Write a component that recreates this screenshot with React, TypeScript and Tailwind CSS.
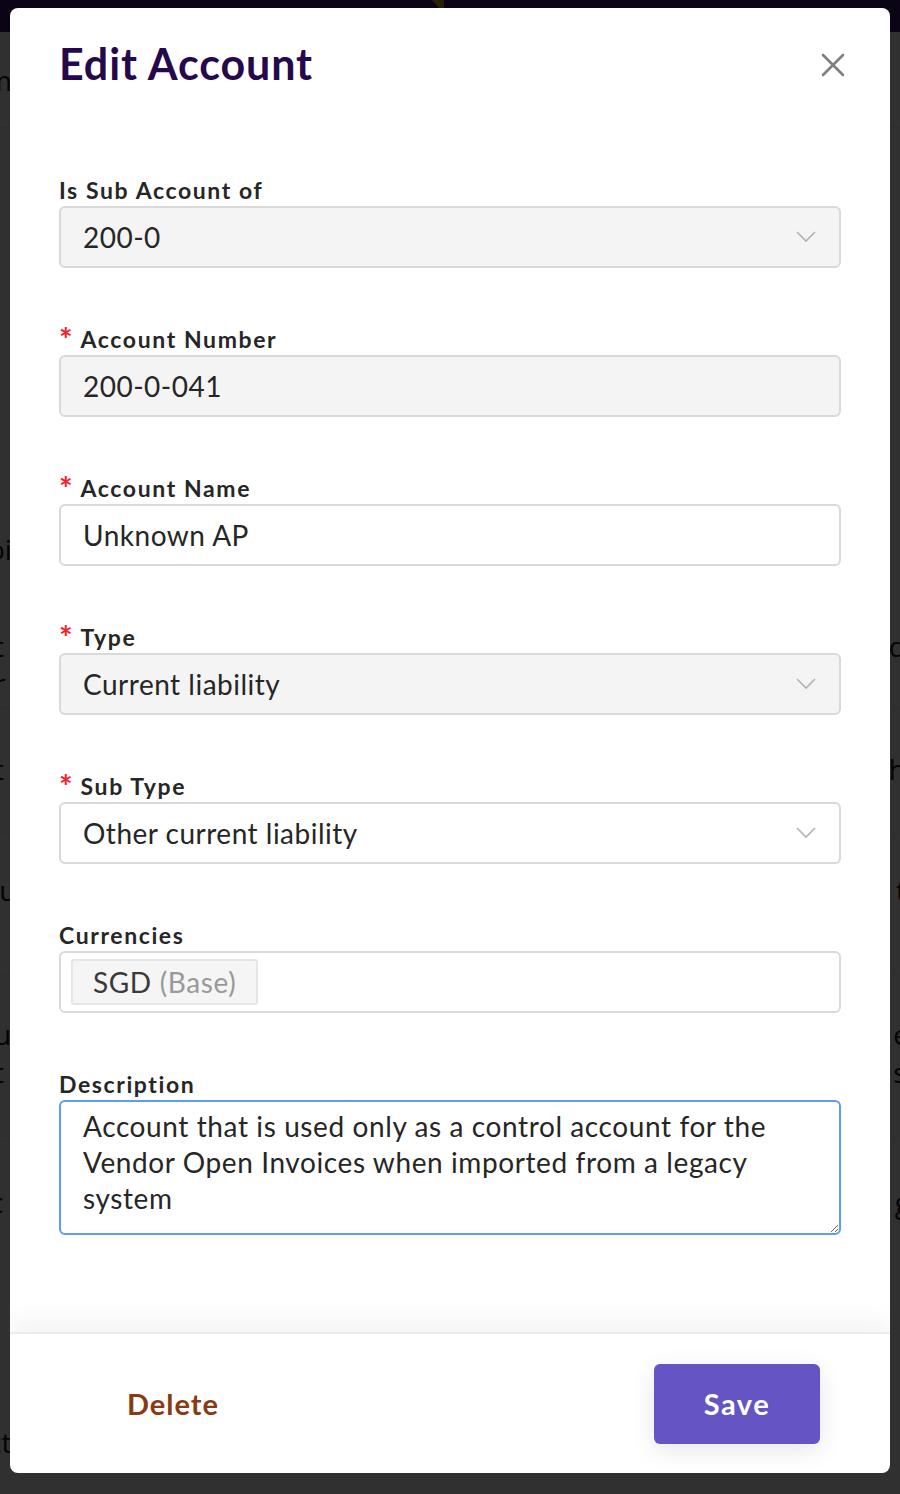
import { useState } from 'react';

const font = { fontFamily: 'Lato, "Open Sans", sans-serif' };

function Chevron() {
  return (
    <svg width="20" height="12" viewBox="0 0 20 12" fill="none" className="shrink-0">
      <polyline points="1,1 10,10 19,1" stroke="#b3b3b3" strokeWidth="1.6" fill="none" />
    </svg>
  );
}

function Label({ text, required }: { text: string; required?: boolean }) {
  return (
    <div className="flex items-center h-[28px] mb-[2px] text-[23px] font-bold text-[#262626] tracking-[1.6px]">
      {required && (
        <span className="text-[#f5222d] text-[32px] font-bold mr-[8px] leading-none mt-[2px] tracking-normal">*</span>
      )}
      {text}
    </div>
  );
}

function Field({ label, required, children }: { label: string; required?: boolean; children: React.ReactNode }) {
  return (
    <div className="mb-[57px]">
      <Label text={label} required={required} />
      {children}
    </div>
  );
}

function SelectBox({ value, disabled }: { value: string; disabled?: boolean }) {
  return (
    <div
      className={`h-[62px] flex items-center justify-between pl-[22px] pr-[23px] rounded-[6px] border-2 border-[#d9d9d9] text-[28px] tracking-[0.5px] text-[#262626] ${
        disabled ? 'bg-[#f4f4f4]' : 'bg-white'
      }`}
    >
      <span>{value}</span>
      <Chevron />
    </div>
  );
}

function TextBox({ value, disabled }: { value: string; disabled?: boolean }) {
  return (
    <div
      className={`h-[62px] flex items-center pl-[22px] rounded-[6px] border-2 border-[#d9d9d9] text-[28px] tracking-[0.5px] text-[#262626] ${
        disabled ? 'bg-[#f4f4f4]' : 'bg-white'
      }`}
    >
      {value}
    </div>
  );
}

// dimmed page that sits behind the overlay
function BackgroundPage() {
  return (
    <div className="min-h-[1494px] bg-white text-[#111] text-[28px]" style={{ fontFamily: '"Open Sans", sans-serif' }}>
      <div className="h-[32px] bg-[#3a1574] relative">
        <div className="absolute left-[432px] top-0 w-0 h-0 border-l-[12px] border-l-transparent border-t-[14px] border-t-[#c8a838]" />
      </div>
      <div className="h-[96px] flex items-center -ml-[14px] border-b border-[#eee]">m</div>
      <div className="h-[400px]" />
      <div className="flex justify-between -mx-[12px] h-[40px]">
        <span>oi</span>
        <span />
      </div>
      <div className="h-[60px]" />
      <div className="flex justify-between -mx-[6px] border-b border-[#eee] pb-[6px] leading-[37px]">
        <div>
          <div>t</div>
          <div>r</div>
        </div>
        <div>d</div>
      </div>
      <div className="h-[40px]" />
      <div className="flex justify-between -mx-[6px] border-b border-[#eee] leading-[40px] pb-[44px]">
        <span>t</span>
        <span>h</span>
      </div>
      <div className="h-[36px]" />
      <div className="flex justify-between -ml-[18px] -mr-[6px] border-b border-[#eee] leading-[40px] pb-[64px]">
        <span>nu</span>
        <span>t</span>
      </div>
      <div className="h-[40px]" />
      <div className="flex justify-between -ml-[6px] -mr-[16px] border-b border-[#eee] leading-[38px] pb-[50px]">
        <div>
          <div>u</div>
          <div>t</div>
        </div>
        <div>
          <div>el</div>
          <div>s</div>
        </div>
      </div>
      <div className="h-[40px]" />
      <div className="flex justify-between -mx-[10px] leading-[40px]">
        <span>c</span>
        <span>g</span>
      </div>
      <div className="h-[200px]" />
      <div className="-ml-[12px] leading-[40px]">ct</div>
    </div>
  );
}

export default function App() {
  const [description] = useState(
    'Account that is used only as a control account for the Vendor Open Invoices when imported from a legacy system'
  );

  return (
    <div className="relative w-[900px] h-[1494px] overflow-hidden">
      <BackgroundPage />

      <div className="absolute inset-0 bg-[rgba(0,0,0,0.81)] pt-[8px] px-[10px]" style={font}>
        <div className="h-[1465px] bg-white rounded-[8px] flex flex-col overflow-hidden">
          <header className="flex items-start justify-between pl-[49px] pr-[42px] pt-[30px]">
            <h1 className="text-[43px] leading-[52px] font-bold text-[#26094d] tracking-[0.9px]">Edit Account</h1>
            <button type="button" aria-label="Close" className="mt-[12px] p-[2px]">
              <svg width="26" height="26" viewBox="0 0 26 26">
                <path d="M3 3 L23 23 M23 3 L3 23" stroke="#7f7f7f" strokeWidth="2.6" strokeLinecap="round" />
              </svg>
            </button>
          </header>

          <div className="flex-1 px-[49px] pt-[86px]">
            <Field label="Is Sub Account of">
              <SelectBox value="200-0" disabled />
            </Field>

            <Field label="Account Number" required>
              <TextBox value="200-0-041" disabled />
            </Field>

            <Field label="Account Name" required>
              <TextBox value="Unknown AP" />
            </Field>

            <Field label="Type" required>
              <SelectBox value="Current liability" disabled />
            </Field>

            <Field label="Sub Type" required>
              <SelectBox value="Other current liability" />
            </Field>

            <Field label="Currencies">
              <div className="h-[62px] flex items-center pl-[10px] rounded-[6px] border-2 border-[#d9d9d9] bg-white">
                <span className="h-[46px] flex items-center px-[20px] bg-[#f5f5f5] border-2 border-[#e6e6e6] rounded-[3px] text-[28px] tracking-[0.6px] text-[#3a3a3a]">
                  SGD<span className="ml-[8px] text-[#999]">(Base)</span>
                </span>
              </div>
            </Field>

            <div>
              <Label text="Description" />
              <textarea
                readOnly
                value={description}
                className="block w-full h-[135px] rounded-[6px] border-2 border-[#5b9ef2] px-[22px] pt-[6px] text-[28px] leading-[36px] tracking-[0.6px] text-[#262626] outline-none resize-y"
                style={font}
              />
            </div>
          </div>

          <footer className="h-[141px] shrink-0 flex items-center justify-between pl-[80px] pr-[70px] border-t-2 border-[#ececec] shadow-[0_-12px_24px_rgba(0,0,0,0.05)]">
            <button type="button" className="w-[166px] h-[80px] text-[29px] font-bold tracking-[1px] text-[#8a3a12]">
              Delete
            </button>
            <button
              type="button"
              className="w-[166px] h-[80px] rounded-[6px] bg-[#6554c3] text-white text-[29px] font-bold tracking-[1.5px] shadow-[0_6px_24px_rgba(0,0,0,0.10)]"
            >
              Save
            </button>
          </footer>
        </div>
      </div>
    </div>
  );
}
